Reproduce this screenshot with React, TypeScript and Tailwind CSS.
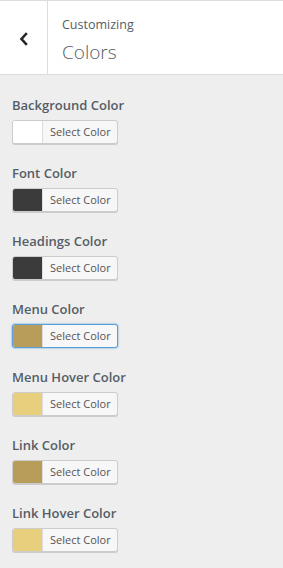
import React from "react";

type ColorRowProps = {
  label: string;
  color: string;
  focused?: boolean;
};

const ColorRow = ({ label, color, focused }: ColorRowProps) => (
  <div className="flex flex-col">
    <span className="text-[13px] leading-[20px] font-semibold text-[#555d66]">
      {label}
    </span>
    <button
      className={`mt-[5px] flex h-[24px] w-[106px] items-stretch overflow-hidden rounded-[3px] border bg-[#f7f7f7] text-left ${
        focused
          ? "border-[#5b9dd9] shadow-[0_0_2px_rgba(30,140,190,0.8)]"
          : "border-[#ccc] shadow-[0_1px_0_#ccc]"
      }`}
    >
      <span
        className="w-[30px] shrink-0 border-r border-[#ddd]"
        style={{ backgroundColor: color }}
      />
      <span className="flex items-center pl-[7px] text-[11px] text-[#555]">
        Select Color
      </span>
    </button>
  </div>
);

const rows: ColorRowProps[] = [
  { label: "Background Color", color: "#ffffff" },
  { label: "Font Color", color: "#3b3b3b" },
  { label: "Headings Color", color: "#3b3b3b" },
  { label: "Menu Color", color: "#b89d5a", focused: true },
  { label: "Menu Hover Color", color: "#e7cf7e" },
  { label: "Link Color", color: "#b89d5a" },
  { label: "Link Hover Color", color: "#e7cf7e" },
];

export default function App() {
  return (
    <div className="h-[568px] w-[283px] overflow-hidden bg-[#eee] font-['Open_Sans',sans-serif]">
      <header className="flex h-[75px] border-t border-b border-[#ddd] bg-white">
        <button className="flex w-[48px] shrink-0 items-center justify-center border-r border-[#ddd] pt-[2px] text-[#23282d]">
          <svg width="12" height="14" viewBox="0 0 12 14" fill="none">
            <path
              d="M8 2 L3.5 7 L8 12"
              stroke="currentColor"
              strokeWidth="2.6"
              strokeLinecap="square"
            />
          </svg>
        </button>
        <div className="flex flex-col justify-center pl-[14px] pt-[5px]">
          <span className="text-[12.5px] leading-[18px] text-[#555d66]">
            Customizing
          </span>
          <span className="mt-[5px] text-[19px] leading-[26px] font-light text-[#555d66]">
            Colors
          </span>
        </div>
      </header>

      <div className="flex flex-col gap-[19px] px-[12px] pt-[20px]">
        {rows.map((r) => (
          <ColorRow key={r.label} {...r} />
        ))}
      </div>
    </div>
  );
}
